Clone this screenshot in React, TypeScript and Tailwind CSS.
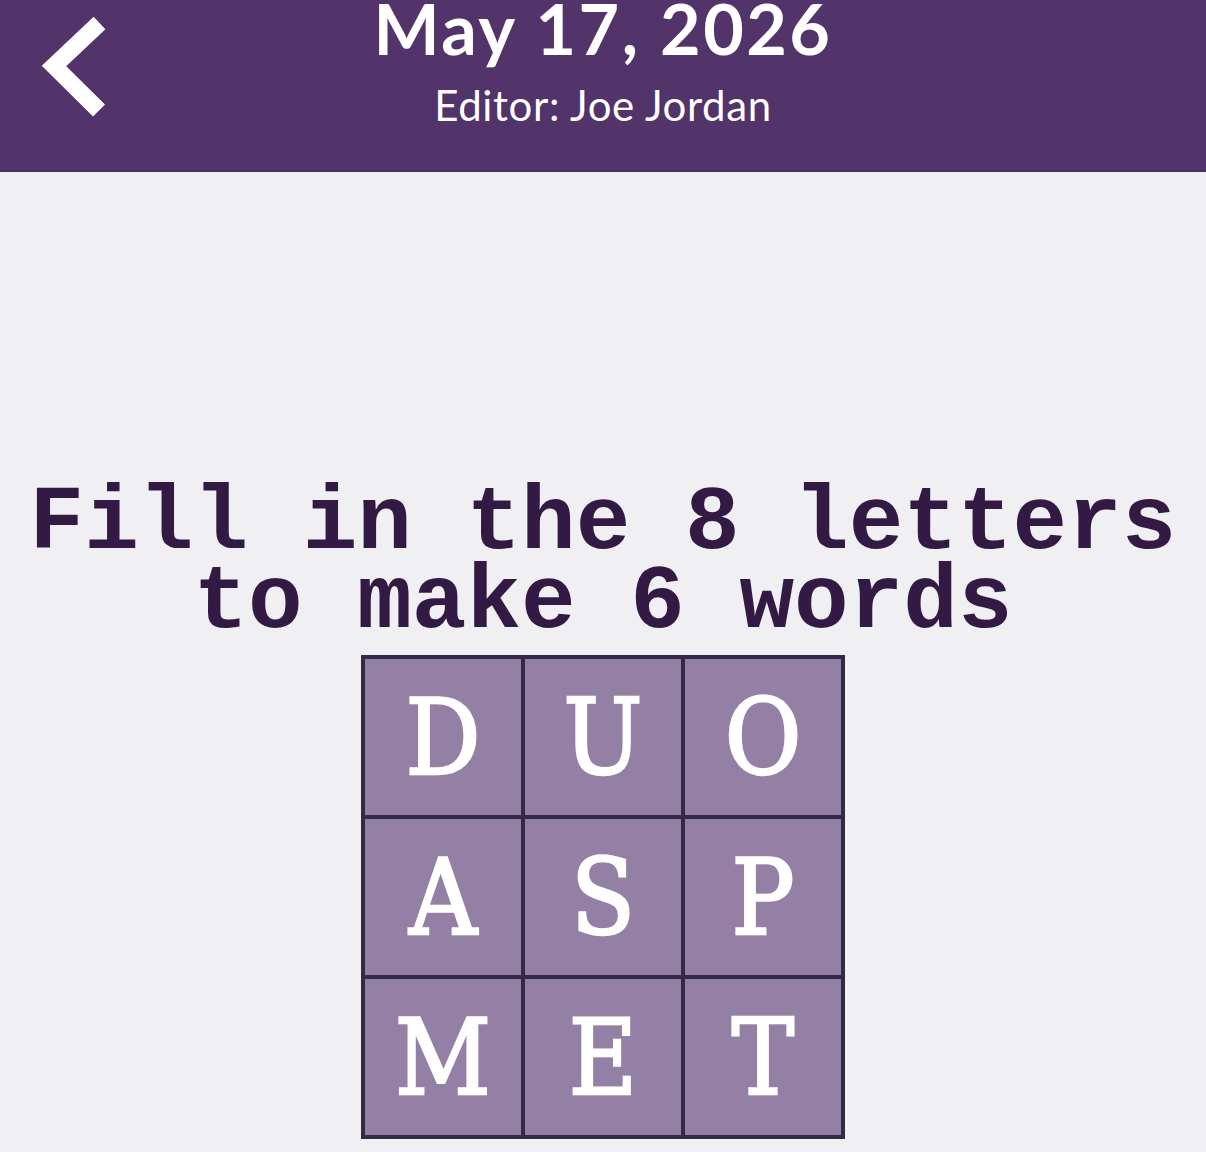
import React from "react";

const letters = ["D", "U", "O", "A", "S", "P", "M", "E", "T"];

export default function App() {
  return (
    <div className="min-h-[1152px] w-full bg-[#f0f0f2]">
      <header className="relative h-[172px] bg-[#52336a] border-b border-[#4a2e60]">
        <svg className="absolute left-0 top-0" width="120" height="130" viewBox="0 0 120 130">
          <path d="M99.5 23 L54 66 L99 110.5" fill="none" stroke="#ffffff" strokeWidth="17" strokeLinecap="butt" strokeLinejoin="miter" />
        </svg>
        <div className="flex flex-col items-center text-white" style={{ fontFamily: "Lato, 'Open Sans', sans-serif" }}>
          <div className="text-[70px] leading-[64px] font-bold mt-[-4px] tracking-[2.5px]">May 17, 2026</div>
          <div className="text-[42px] leading-[48px] mt-[21px] tracking-[0.6px]">Editor: Joe Jordan</div>
        </div>
      </header>
      <main className="flex flex-col items-center pt-[312px]">
        <h1
          className="text-center text-[91px] leading-[79px] font-bold text-[#331a45] whitespace-pre"
          style={{ fontFamily: "'Liberation Mono', 'Courier New', monospace" }}
        >
          {"Fill in the 8 letters\nto make 6 words"}
        </h1>
        <div className="mt-[13px] grid grid-cols-3 gap-[4px] bg-[#352a45] p-[4px]">
          {letters.map((l) => (
            <div
              key={l}
              className="flex h-[156px] w-[156px] items-center justify-center bg-[#9480a5] pt-[2px] text-[104px] leading-none text-white [-webkit-text-stroke:2.5px_white]"
              style={{ fontFamily: "'DejaVu Serif Condensed', 'DejaVu Serif', serif" }}
            >
              {l}
            </div>
          ))}
        </div>
      </main>
    </div>
  );
}
